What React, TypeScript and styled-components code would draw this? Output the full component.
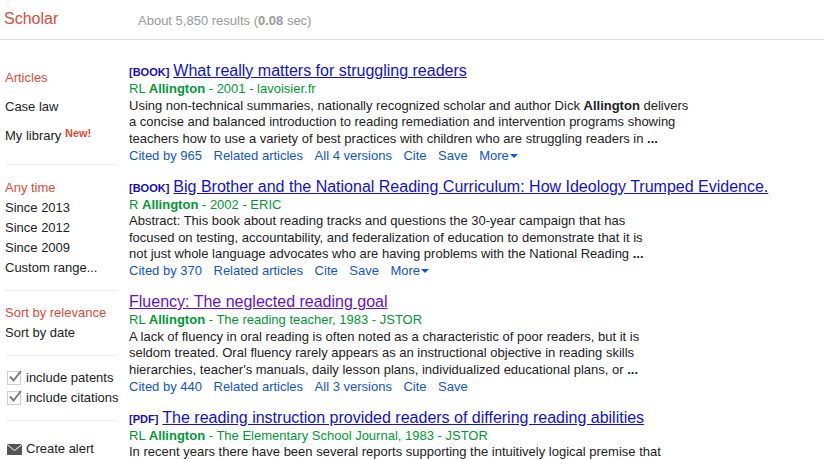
import styled, { createGlobalStyle } from "styled-components"

const GlobalStyle = createGlobalStyle`
  html, body {
    margin: 0;
    padding: 0;
    background: #fff;
    overflow: hidden;
  }
  body {
    width: 824px;
    height: 459px;
    font-family: "Liberation Sans", Arial, sans-serif;
    font-size: 13px;
  }
`

type Hit = {
  tag?: string
  title: string
  visited?: boolean
  author: string
  name: string
  source: string
  lines: React.ReactNode[]
  links: string[]
  more?: boolean
}

const hits: Hit[] = [
  {
    tag: "[BOOK]",
    title: "What really matters for struggling readers",
    author: "RL ",
    name: "Allington",
    source: " - 2001 - lavoisier.fr",
    lines: [
      <>Using non-technical summaries, nationally recognized scholar and author Dick <b>Allington</b> delivers</>,
      "a concise and balanced introduction to reading remediation and intervention programs showing",
      <>teachers how to use a variety of best practices with children who are struggling readers in <b>...</b></>,
    ],
    links: ["Cited by 965", "Related articles", "All 4 versions", "Cite", "Save"],
    more: true,
  },
  {
    tag: "[BOOK]",
    title: "Big Brother and the National Reading Curriculum: How Ideology Trumped Evidence.",
    author: "R ",
    name: "Allington",
    source: " - 2002 - ERIC",
    lines: [
      "Abstract: This book about reading tracks and questions the 30-year campaign that has",
      "focused on testing, accountability, and federalization of education to demonstrate that it is",
      <>not just whole language advocates who are having problems with the National Reading <b>...</b></>,
    ],
    links: ["Cited by 370", "Related articles", "Cite", "Save"],
    more: true,
  },
  {
    title: "Fluency: The neglected reading goal",
    visited: true,
    author: "RL ",
    name: "Allington",
    source: " - The reading teacher, 1983 - JSTOR",
    lines: [
      "A lack of fluency in oral reading is often noted as a characteristic of poor readers, but it is",
      "seldom treated. Oral fluency rarely appears as an instructional objective in reading skills",
      <>hierarchies, teacher's manuals, daily lesson plans, individualized educational plans, or <b>...</b></>,
    ],
    links: ["Cited by 440", "Related articles", "All 3 versions", "Cite", "Save"],
  },
  {
    tag: "[PDF]",
    title: "The reading instruction provided readers of differing reading abilities",
    author: "RL ",
    name: "Allington",
    source: " - The Elementary School Journal, 1983 - JSTOR",
    lines: ["In recent years there have been several reports supporting the intuitively logical premise that"],
    links: [],
  },
]

const CheckMark = () => (
  <CheckSvg width="16" height="15" viewBox="0 0 16 15">
    <path d="M3 7.5 L6.5 11.5 L14 2" fill="none" stroke="#7a7a7a" strokeWidth="2" />
  </CheckSvg>
)

const App = () => {
  return (
    <Page>
      <GlobalStyle />
      <Header>
        <Logo>Scholar</Logo>
        <Stats>
          About 5,850 results (<b>0.08</b> sec)
        </Stats>
      </Header>
      <Body>
        <Sidebar>
          <Group>
            <NavItem $active $tall>Articles</NavItem>
            <NavItem $tall>Case law</NavItem>
            <NavItem $tall>
              My library <NewBadge>New!</NewBadge>
            </NavItem>
          </Group>
          <Group>
            <NavItem $active>Any time</NavItem>
            <NavItem>Since 2013</NavItem>
            <NavItem>Since 2012</NavItem>
            <NavItem>Since 2009</NavItem>
            <NavItem>Custom range...</NavItem>
          </Group>
          <Group>
            <NavItem $active>Sort by relevance</NavItem>
            <NavItem>Sort by date</NavItem>
          </Group>
          <CheckGroup>
            <CheckRow>
              <CheckBox>
                <CheckMark />
              </CheckBox>
              include patents
            </CheckRow>
            <CheckRow>
              <CheckBox>
                <CheckMark />
              </CheckBox>
              include citations
            </CheckRow>
          </CheckGroup>
          <AlertRow>
            <svg width="15" height="11" viewBox="0 0 15 11">
              <rect width="15" height="11" fill="#555" />
              <path d="M0 0.5 L7.5 6.5 L15 0.5" fill="none" stroke="#fff" strokeWidth="1" />
            </svg>
            Create alert
          </AlertRow>
        </Sidebar>
        <Results>
          {hits.map((hit) => (
            <Result key={hit.title}>
              <TitleRow>
                {hit.tag && <Tag>{hit.tag}</Tag>}
                <TitleLink $visited={hit.visited}>{hit.title}</TitleLink>
              </TitleRow>
              <Byline>
                {hit.author}
                <b>{hit.name}</b>
                {hit.source}
              </Byline>
              {hit.lines.map((line, i) => (
                <Snippet key={i}>{line}</Snippet>
              ))}
              {hit.links.length > 0 && (
                <Links>
                  {hit.links.map((link) => (
                    <span key={link}>{link}</span>
                  ))}
                  {hit.more && (
                    <MoreLink>
                      More<Caret />
                    </MoreLink>
                  )}
                </Links>
              )}
            </Result>
          ))}
        </Results>
      </Body>
    </Page>
  )
}

export default App

const Page = styled.div`
  width: 824px;
  height: 459px;
  overflow: hidden;
`

const Header = styled.div`
  height: 40px;
  box-sizing: border-box;
  border-bottom: 1px solid #dedede;
  display: flex;
  align-items: flex-start;
`

const Logo = styled.div`
  width: 138px;
  padding: 10px 0 0 4px;
  box-sizing: border-box;
  font-size: 16px;
  line-height: 18px;
  color: #dd4b39;
`

const Stats = styled.div`
  padding-top: 13px;
  font-size: 13px;
  line-height: 15px;
  color: #999;
`

const Body = styled.div`
  display: flex;
`

const Sidebar = styled.div`
  width: 129px;
  flex-shrink: 0;
  padding: 28px 0 0 5px;
  box-sizing: border-box;
`

const Group = styled.div`
  width: 112px;
  padding-bottom: 12px;
  margin-bottom: 12px;
  border-bottom: 1px solid #eee;

  &:first-child {
    padding-bottom: 9px;
    margin-bottom: 13px;
  }
`

const CheckGroup = styled(Group)`
  margin-top: -1px;
  padding-bottom: 13px;
`

const NavItem = styled.div<{ $active?: boolean; $tall?: boolean }>`
  height: ${(p) => (p.$tall ? 29 : 20)}px;
  line-height: 20px;
  font-size: 13px;
  white-space: nowrap;
  color: ${(p) => (p.$active ? "#dd4b39" : "#222")};
`

const NewBadge = styled.span`
  font-size: 11px;
  font-weight: bold;
  color: #dd4b39;
  position: relative;
  top: -3px;
`

const CheckRow = styled.div`
  display: flex;
  align-items: center;
  height: 20px;
  font-size: 13px;
  color: #222;
  white-space: nowrap;
`

const CheckBox = styled.span`
  position: relative;
  width: 12px;
  height: 12px;
  border: 1px solid #cfcfcf;
  margin: 1px 5px 0 2px;
  flex-shrink: 0;
`

// the tick pokes out past the top right corner of the box
const CheckSvg = styled.svg`
  position: absolute;
  left: -1px;
  top: -3px;
`

const AlertRow = styled.div`
  display: flex;
  align-items: center;
  gap: 4px;
  padding: 6px 0 0 2px;
  font-size: 13px;
  line-height: 20px;
  color: #222;
`

const Results = styled.div`
  flex: 1;
  padding-top: 21px;
  min-width: 0;
`

const Result = styled.div`
  margin-bottom: 12.5px;
`

const TitleRow = styled.div`
  line-height: 20px;
  height: 20px;
  white-space: nowrap;
`

const Tag = styled.span`
  font-size: 11px;
  font-weight: bold;
  color: #1a0dab;
  margin-right: 4px;
`

const TitleLink = styled.span<{ $visited?: boolean }>`
  font-size: 16px;
  text-decoration: underline;
  color: ${(p) => (p.$visited ? "#6611cc" : "#1111cc")};
`

const Byline = styled.div`
  font-size: 13px;
  line-height: 16px;
  margin-bottom: 0.5px;
  color: #009933;
  white-space: nowrap;
`

const Snippet = styled.div`
  font-size: 13px;
  line-height: 16.5px;
  color: #222;
  white-space: nowrap;
`

const Links = styled.div`
  display: flex;
  gap: 11.5px;
  margin-top: 0.5px;
  font-size: 13px;
  line-height: 16.5px;
  color: #1155cc;
  white-space: nowrap;
`

const MoreLink = styled.span`
  display: inline-flex;
  align-items: center;
`

const Caret = styled.span`
  width: 0;
  height: 0;
  margin-left: 1px;
  border-left: 4px solid transparent;
  border-right: 4px solid transparent;
  border-top: 4px solid #1155cc;
`
